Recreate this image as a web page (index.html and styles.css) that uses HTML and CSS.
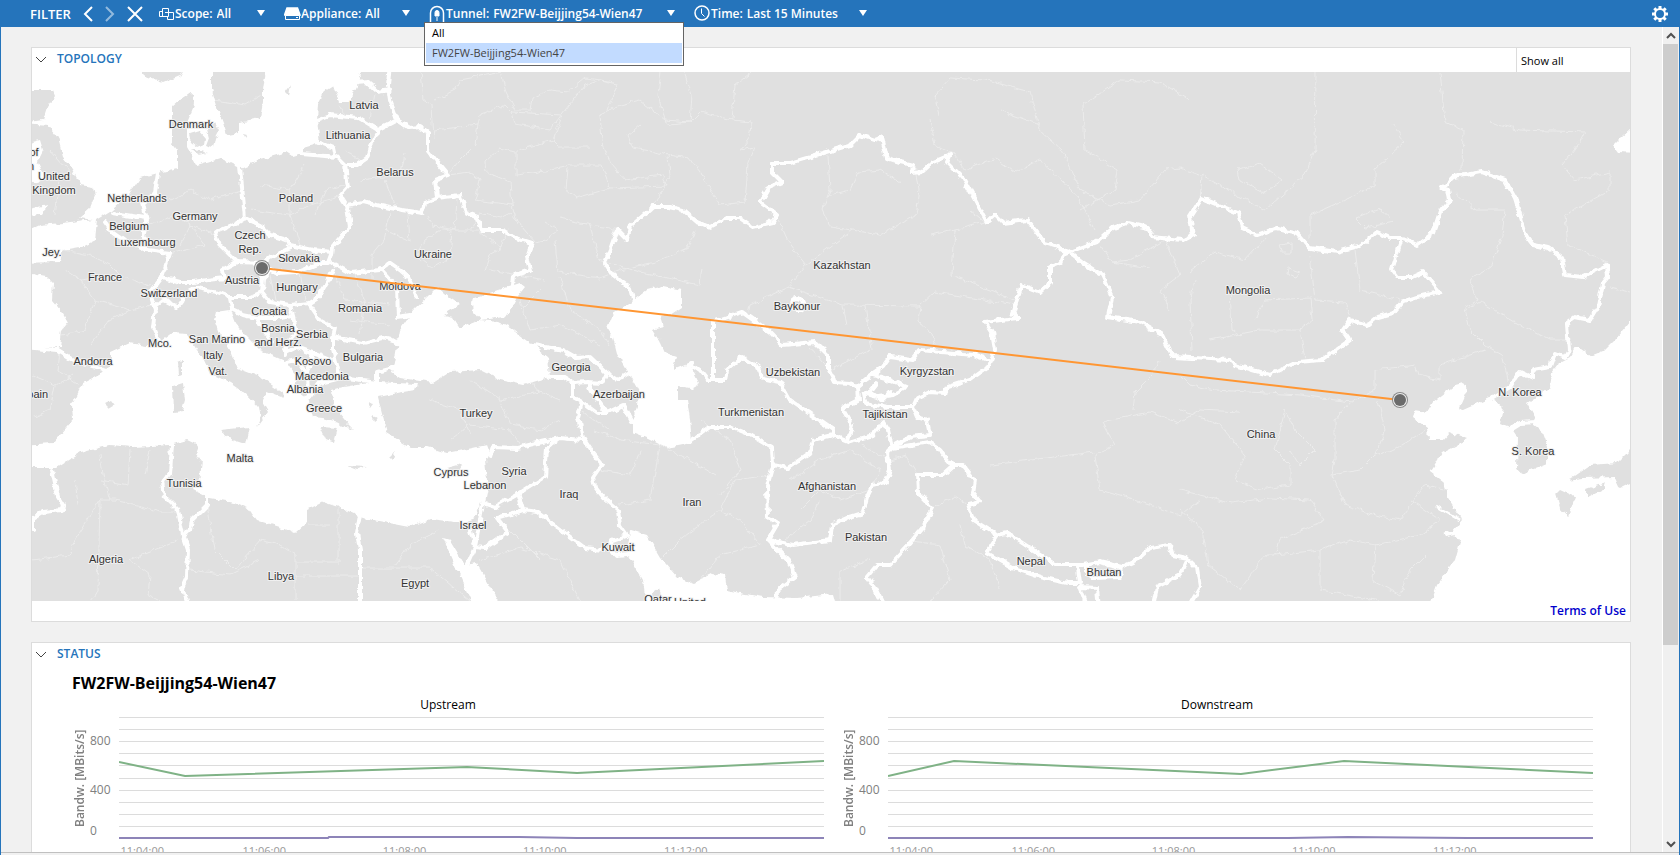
FILE: index.html
```html
<!DOCTYPE html>
<html lang="en">
  <head>
    <meta charset="UTF-8" />
    <meta name="viewport" content="width=device-width, initial-scale=1.0" />
    <title>Tunnel Topology</title>
    <link rel="stylesheet" href="styles.css">
  </head>
  <body>
    <header class="filter-bar">
      <span class="filter-title">FILTER</span>
      <div class="filter-nav">
        <button class="icon-button" aria-label="Back">
          <svg width="10" height="16" viewBox="0 0 10 16"><path d="M9 1L2 8l7 7" /></svg>
        </button>
        <button class="icon-button faded" aria-label="Forward" disabled>
          <svg width="10" height="16" viewBox="0 0 10 16"><path d="M1 1l7 7-7 7" /></svg>
        </button>
        <button class="icon-button" aria-label="Clear filter">
          <svg width="16" height="16" viewBox="0 0 16 16"><path d="M1 1l14 14M15 1L1 15" /></svg>
        </button>
      </div>

      <div class="filter-item scope">
        <svg width="17" height="14" viewBox="0 0 17 14" class="thin"><path d="M4 4.500H1.500v5H6M4.500 1.500h6v8h-6zM10.500 5.500h5v7h-6v-3M7 5.500h4" /></svg>
        <label for="scope">Scope:</label>
        <select id="scope"><option>All</option></select>
      </div>
      <div class="filter-item appliance">
        <svg width="17" height="14" viewBox="0 0 17 14"><path d="M3 1h10.500l2.500 7H.5z" class="solid" /><path d="M1.500 8.500h14v4h-14z" class="thin" /><path d="M12 10.500h2" class="thin" /></svg>
        <label for="appliance">Appliance:</label>
        <select id="appliance"><option>All</option></select>
      </div>
      <div class="filter-item tunnel">
        <svg width="17" height="18" viewBox="0 0 17 18"><path d="M1.500 17V8a6.500 6.500 0 0 1 13 0v9" /><path d="M8 5.500a2 2 0 0 1 2 2V11H6V7.500a2 2 0 0 1 2-2z" class="solid thin" /><path d="M8 12v4" class="thin" /></svg>
        <label for="tunnel">Tunnel:</label>
        <select id="tunnel">
          <option>All</option>
          <option selected>FW2FW-Beijjing54-Wien47</option>
        </select>
        <ul class="dropdown" role="listbox" aria-label="Tunnel">
          <li role="option" aria-selected="false">All</li>
          <li role="option" aria-selected="true">FW2FW-Beijjing54-Wien47</li>
        </ul>
      </div>
      <div class="filter-item time">
        <svg width="17" height="17" viewBox="0 0 17 17"><circle cx="8" cy="8" r="7" /><path d="M7.500 3.500v5l3 3" class="thin" /></svg>
        <label for="time">Time:</label>
        <select id="time"><option>Last 15 Minutes</option></select>
      </div>

      <button class="icon-button settings" aria-label="Settings">
        <svg width="18" height="18" viewBox="0 0 18 18"><circle cx="9" cy="9" r="5" /><g class="teeth"><path d="M9 1v3M9 14v3M1 9h3M14 9h3M3.300 3.300l2.200 2.200M12.500 12.500l2.200 2.200M3.300 14.700l2.200-2.200M12.500 5.500l2.200-2.200" /></g></svg>
      </button>
    </header>

    <div class="viewport">
      <main class="content">
        <section class="panel">
          <div class="panel-head">
            <button class="collapse" aria-label="Collapse topology">
              <svg width="12" height="8" viewBox="0 0 12 8"><path d="M1 1l5 5 5-5" /></svg>
            </button>
            <h2>TOPOLOGY</h2>
            <button class="show-all">Show all</button>
          </div>

          <svg class="map" viewBox="32 72 1598 529" role="img" aria-label="Tunnel map">
            <defs>
              <filter id="rough" filterUnits="userSpaceOnUse" x="20" y="60" width="1620" height="552" color-interpolation-filters="sRGB">
                <feTurbulence type="fractalNoise" baseFrequency="0.14" numOctaves="2" seed="4" />
                <feDisplacementMap in="SourceGraphic" scale="6" xChannelSelector="R" yChannelSelector="G" />
              </filter>
            </defs>
            <rect class="land" x="32" y="72" width="1598" height="529" />

            <g filter="url(#rough)">
              <!-- provinces -->
              <g class="provinces">
                <path d="M421 72L424 100L432 105L434 140M434 100L455 90L460 80L502 72M501 72L506 92L515 110L530 110L532 98L550 90L568 92L585 78L615 82M478 125L480 115L505 105L512 112L515 124L550 130L562 114L585 85L600 80L618 84L608 110M512 112L562 115L553 140L560 147L590 147M434 130L478 125L475 145L458 162L448 175L470 172L480 180L475 200L512 205L510 182L486 172L485 162L500 148L516 152L516 175L540 172L556 168L570 165L602 165L610 188L668 186M553 140L518 150M610 188L575 198L565 190L567 168M668 186L662 175L625 180L612 165L605 150L602 140L600 115L620 105L640 100L655 112L670 124L690 122L700 112L732 120L752 122L748 140L740 150L755 147M640 125L628 135L632 148L645 150L668 155L690 158L700 172L712 192L720 205L745 202L748 165L755 147M661 72L658 95L665 120L690 122L692 95L684 72M752 72L735 85L732 120M668 155L670 175L655 205M560 218L590 225L610 228L618 230" />
                <path d="M390 213L384 240L372 255L372 278M427 215L433 226L455 230L457 198M440 230L425 240L415 256L432 268L450 258L452 230L478 230L500 248L508 228M385 230L410 242L408 213M470 230L480 213L500 218L510 213L535 242L545 240L558 230L545 222M555 240L558 272L600 278L620 270L655 262L688 248L695 230M512 205L518 225M485 270L490 255L502 248M590 225L598 260L640 272L700 285L702 268" />
                <path d="M828 155L830 190L822 210L830 227L852 230L880 235L898 225L916 215L920 190L915 165M830 195L850 190L858 172L880 170L900 182M777 217L790 245L806 265L788 287L750 305L748 315M788 287L842 305L920 306L935 292L1015 305M852 230L806 265M930 235L955 230L952 275L990 290L1015 300M920 306L918 320L932 335L935 345M842 306L846 325M865 306L872 350M810 347L830 370L870 350M955 230L985 222L970 210M930 120L935 145L955 155L965 170L995 158L1015 172L1040 160L1062 180L1080 200L1095 230M940 115L935 95L950 78L985 80L1030 92L1040 130L1062 150L1080 190L1110 205L1140 200L1165 170L1180 168L1200 175M1083 105L1085 150L1118 170L1115 190L1080 210M1000 110L1040 125M1083 105L1120 80L1160 82L1190 100" />
                <path d="M1316 72L1315 150L1305 175L1265 210L1202 175L1200 200M1238 170L1260 163L1282 180L1265 193L1240 180zM1393 125L1405 142L1375 170L1375 185L1345 200L1310 215L1310 240M1355 218L1380 208L1393 222L1365 228zM1462 170L1463 130L1445 122L1440 72M1490 122L1520 130L1585 132L1578 145L1562 165L1575 180L1610 172L1610 190L1565 215L1568 245L1608 262M1455 192L1475 210L1505 210L1502 235L1492 265L1470 280L1478 300L1465 308L1470 330L1485 345L1502 355L1508 380M1465 310L1480 302L1515 322L1550 340L1568 340M1610 287L1630 292" />
                <path d="M1100 245L1112 262L1130 260L1165 240L1180 275L1160 290L1170 310M1112 262L1150 268M1190 272L1215 252L1245 260L1265 238M1195 280L1190 300L1192 350M1230 290L1232 330L1242 335M1210 340L1260 330L1300 330L1305 360M1255 320L1265 300L1310 298L1312 320L1300 330M1310 255L1315 300L1345 302L1352 325M1355 250L1360 290L1400 300M1280 245L1292 243L1292 252L1282 252zM1288 268L1300 272L1296 277L1287 274zM1180 375L1190 385L1215 390L1300 395L1350 402L1375 390L1375 370L1415 365L1418 375L1440 380L1440 365L1485 350M1350 402L1335 420L1335 460L1332 475L1360 470L1375 455L1385 430L1378 400M1180 410L1220 425L1245 455L1235 480L1260 490L1290 485L1290 465L1275 450L1285 410L1295 430L1315 450L1300 465L1290 450M1332 475L1345 505L1375 515L1400 520L1425 485L1450 490M1375 455L1395 450L1410 440L1425 430M1180 490L1200 495L1230 503L1270 498L1310 500L1325 520L1280 540L1275 555L1320 550L1350 540L1375 545L1420 535L1440 520L1410 500M1320 550L1320 590L1380 601M1375 545L1373 580L1400 595L1410 570L1425 555M1180 510L1203 530L1208 565L1240 590L1265 555L1275 555" />
                <path d="M1102 422L1150 412L1178 423L1200 410L1240 412M1102 422L1115 445L1095 455L1100 490L1140 502L1180 515L1200 500M990 465L1030 460L1095 452M1133 410L1135 392L1152 375L1160 360M860 445L890 460L905 455L917 473M790 480L820 460L850 450L880 470L870 490L840 500L820 490L800 510M785 540L810 520L820 500M930 508L955 497L968 505M960 525L965 545L990 560L1000 590M870 560L840 570L840 601M905 540L940 545L950 580L930 601M700 420L730 440L740 470L720 495M595 430L620 440L660 445L690 460L715 475M640 450L630 475L600 470M660 445L650 500L620 505M720 510L740 520L760 545M660 560L680 540L720 510L735 480L770 475M700 580L720 555L760 545" />
                <path d="M470 380L500 400L540 392L560 400M430 400L460 410L470 435M500 400L510 425L540 430L560 420M530 380L540 392M450 440L470 425L510 430L520 445M520 300L530 330L560 325L600 345M560 278L570 310L600 330L610 345M540 290L520 310M490 270L545 280M480 560L520 548L560 560L580 601M500 520L540 560M580 410L610 430" />
                <path d="M32 560L70 555L75 540L100 500L115 500L160 512L178 512M100 500L98 590L90 601M75 480L78 505M100 455L103 475L110 500M130 450L128 485L100 480M150 450L145 475M178 540L130 560L150 575L148 595L160 601M207 505L215 550L235 570L260 540L280 545L295 555L295 601M295 576L360 576M362 568L430 568L470 601M338 507L338 562L295 562M308 524L330 524M395 565L410 545L440 530M190 570L230 575L260 560" />
                <path d="M65 270L80 280L95 300L85 330L62 335M80 280L120 275L150 285M95 300L130 310L152 305M90 345L110 320L130 310M63 250L90 255L110 265L120 275M170 200L190 190L210 200L245 190M180 245L190 225L215 235M150 225L175 215L190 225L205 245L165 255M260 185L290 190L305 165M250 210L290 215L310 205L345 195M290 190L290 215L300 245M315 215L325 190L345 185M335 275L345 300L390 305M350 320L390 325M355 275L365 300L360 335M240 275L262 285M270 275L275 300M300 272L305 300M32 375L55 385L72 375M55 385L50 410L32 418M60 350L58 370L80 385M195 103L200 120M55 105L60 130M50 150L72 175M60 180L55 215M215 100L245 105L262 95M340 105L345 115M375 95L370 118M360 180L400 175L405 155M385 180L395 205M345 150L360 160" />
              </g>

              <!-- seas -->
              <g class="water">
                <path d="M22 62L137 62L145 76L163 83L180 76L188 62L212 62L212 90L218 110L223 123L227 135L238 133L238 122L260 118L263 103L263 90L267 62L350 62L362 76L355 90L350 102L340 102L333 85L325 90L318 103L317 120L320 142L303 147L303 153L293 156L287 152L260 160L240 168L220 158L197 165L187 147L187 123L195 103L193 95L180 100L172 107L172 142L178 150L178 168L158 173L140 178L130 193L110 212L97 220L95 240L80 247L63 250L60 262L22 263L22 233L40 225L63 223L92 219L80 217L90 208L95 195L93 187L80 185L72 168L63 157L58 138L48 125L22 123L43 120L47 107L55 95L53 90L22 90z" />
                <path d="M22 272L47 277L53 283L52 300L63 313L68 322L62 330L60 347L22 347z" />
                <path d="M22 145L40 140L43 150L37 162L46 180L34 183L22 175zM22 210L48 205L42 215L22 216z" />
                <path d="M22 445L53 443L73 420L72 405L83 383L102 373L110 365L110 352L130 343L153 347L173 332L187 333L193 343L203 358L210 373L230 383L247 395L258 407L260 420L257 427L268 412L262 402L267 392L283 398L282 392L260 377L237 368L230 350L220 333L215 320L217 312L230 310L235 323L243 333L260 350L287 362L297 377L295 390L308 398L313 417L323 418L350 425L340 413L333 403L332 390L343 387L377 382L417 384L415 390L397 393L378 397L383 417L387 433L410 447L427 447L447 453L463 450L487 445L490 453L485 460L487 480L482 500L473 520L463 523L430 519L410 527L363 518L338 507L323 502L307 510L307 523L295 534L280 527L257 520L248 508L233 502L210 498L193 490L200 477L202 462L195 453L198 445L187 440L170 445L133 447L110 445L80 453L57 468L22 468z" />
                <path d="M400 330L392 373L400 378L433 383L450 372L480 370L500 380L523 385L550 377L548 357L530 343L510 328L498 322L480 320L460 328L453 317L443 315L460 305L450 298L437 287L427 297L413 310L407 320z" />
                <path d="M472 303L473 298L493 292L520 283L525 287L517 297L512 307L505 317L480 320L473 312z" />
                <path d="M630 303L647 290L663 286L682 290L682 307L670 315L660 317L663 327L652 330L660 342L665 353L677 357L673 370L690 363L697 377L700 383L690 389L678 387L678 400L687 400L690 420L692 443L667 448L647 438L632 432L632 420L637 407L638 390L627 370L617 353L613 337L607 328L613 313z" />
                <path d="M630 530L647 535L660 557L677 577L693 583L713 573L725 575L727 590L740 593L763 597L797 598L833 594L838 612L647 612L643 580L627 553z" />
                <path d="M443 538L450 540L465 565L477 563L505 612L476 612L457 570z" />
                <path d="M1640 310L1617 338L1603 352L1593 356L1582 348L1575 348L1570 357L1560 362L1552 373L1550 387L1527 403L1535 417L1533 425L1543 433L1548 447L1547 463L1520 474L1517 468L1518 437L1512 428L1500 423L1503 407L1490 398L1463 410L1460 408L1468 390L1463 383L1455 385L1433 402L1427 412L1415 410L1413 418L1427 428L1428 440L1443 440L1450 432L1468 439L1442 453L1430 472L1443 482L1450 502L1462 520L1452 532L1460 542L1455 560L1437 585L1427 612L1640 612z" />
                <path d="M1640 120L1620 138L1613 145L1618 152L1640 153z" />
                <path class="river" d="M1436 506L1446 512L1460 520M1444 535L1456 532" />
              </g>

              <!-- islands -->
              <g class="land">
                <path d="M189 134L199 131L205 138L204 144L197 147L191 142zM206 126L216 123L220 130L216 138L214 148L206 146L209 138zM191 149L200 151L207 153L198 155zM285 92L291 84L289 96zM177 103L192 92L190 110L180 112zM243 134L247 135L245 138z" />
                <path d="M178 362L183 360L183 374L179 375zM173 386L183 383L185 400L182 411L174 412zM105 404L111 401L114 405L109 408zM220 430L249 427L245 444L233 440zM320 427L338 428L334 443L326 440zM347 466L367 467L357 470zM447 468L462 464L456 474L448 473zM333 418L345 422L353 430L342 426zM366 402L373 404L370 408zM372 416L378 418L374 421zM390 457L395 452L393 460z" />
                <path d="M1568 480L1590 465L1617 463L1632 448L1640 450L1640 478L1620 488L1615 477L1583 478zM1560 490L1575 497L1568 517L1560 508L1556 494zM1585 490L1605 483L1603 489L1588 497z" />
                <path d="M652 592L658 588L662 601L653 601z" />
              </g>

              <!-- country borders -->
              <g class="borders">
                <path d="M355 83L367 82L378 92L390 90M390 62L388 85L390 100L397 120M317 120L330 115L358 118L378 130L397 120M378 132L370 147L367 158L357 165L345 165M318 142L333 148L335 157M302 154L337 157L345 165L348 187L340 196L347 207L350 227L333 247L332 255" />
                <path d="M397 120L410 128L420 127L428 132L428 150L438 163L448 175L435 180L437 198M347 205L363 202L390 208L422 213L425 203L437 198L460 195L467 213L477 217L482 230L503 230L513 237L532 243L527 257L530 270L513 276L512 286" />
                <path d="M240 167L242 187L245 218L237 223L215 232L220 245L237 262L263 263L270 257L290 248L287 240L270 235L260 225L245 218M290 245L313 250L332 252L328 263L320 263L297 272L277 273L266 268" />
                <path d="M237 262L222 270L225 278L207 280L193 282L180 282L162 277M162 277L170 253L147 250L123 240L113 233L105 222M113 213L145 218L147 224M158 173L155 193L143 203L147 220L143 236L150 242" />
                <path d="M197 288L217 292L230 297L250 297L262 292L263 278L268 272M230 298L232 308M262 292L270 302L290 305L310 303L318 298L327 283L333 270M332 263L350 273L380 270L390 263L400 270L408 277L417 297M380 268L397 287L398 317L410 315" />
                <path d="M162 277L150 293L155 310L153 327L160 343M155 307L163 300L177 307L187 293L197 288M310 305L320 320L335 328L333 337L363 343L383 338L400 343M333 337L333 350L340 377L377 382L377 372L393 368M308 398L320 383L340 378" />
                <path d="M287 362L297 360L307 373L308 398M285 353L297 347L313 353L330 360M232 310L243 315L257 318L280 318L293 316L297 333L287 343L285 355M257 318L263 330L272 342M290 305L293 316M313 353L307 373" />
                <path d="M22 347L57 350L73 360L107 370M52 470L58 497L63 505L62 510L43 512L33 518L33 530M172 445L170 473L162 483L165 497L178 510L183 535L188 550L187 577L182 588L190 610M207 497L207 505L192 520L190 530L183 537M360 515L357 533L360 550L360 610" />
                <path d="M533 345L563 350L577 358L590 357L607 373L618 380L630 373M550 377L563 377L573 383L588 382L593 393L607 413L623 405L632 422M573 383L573 397L582 402L578 417L583 438L593 453L602 464L593 477L595 487L603 497L618 510L620 525L627 535M582 402L597 413L607 413M588 382L602 383L607 373" />
                <path d="M490 457L493 447L517 448L537 443L560 438L583 440M560 438L547 448L545 477L520 493L495 507L483 503M518 493L523 510L497 518L508 532L485 548L475 547M523 510L537 512L585 548L603 550M483 503L480 520L475 547L468 563M470 530L475 547M487 483L483 503M627 536L612 541L610 548L617 556L627 555" />
                <path d="M633 300L630 288L613 275L605 263L610 250L617 230L627 240L630 227L653 207L670 207L683 210L697 222L710 227L727 218L740 218L753 227L773 222L777 215L760 202L768 188L782 182L772 172L772 163L790 163L817 155L850 145L860 135L875 140L882 137L887 158L900 162L913 165L912 173L922 172L933 162L950 155L947 162L963 178L987 222L995 215L1003 223L1027 220L1045 243L1058 247L1068 253L1063 255L1060 263L1050 267L1050 283L1040 292L1022 285L1013 313L1017 318L985 322L992 333L995 350L988 367L970 380L948 387L945 393L930 392L917 398L913 407L917 417L927 420L930 435L910 437L890 448" />
                <path d="M988 360L973 355L953 353L920 350L912 360L890 357L883 367L873 375L890 380L907 387L893 395L878 397L863 393L865 403L887 407L913 407M883 367L867 378L855 388L850 383L835 382L828 368L828 355L815 342L782 345L770 332L742 312L713 322L713 380M877 383L870 392L882 400L890 392" />
                <path d="M690 363L700 370L708 380L725 380L727 370L742 357L758 367L762 378L780 382L790 400L833 430L833 437M692 440L710 427L730 427L750 435L772 448L773 465L788 468L810 453L813 440L833 435L850 442L873 435L883 422L888 430L892 448L930 442L940 450L952 465L963 465L975 480L973 493L980 502L968 505L973 520L997 535L1007 533L1033 550L1057 565L1083 565L1100 562L1122 567L1137 560L1150 548L1170 545L1173 555L1187 558L1197 568L1200 587L1188 608" />
                <path d="M773 465L767 487L768 517L778 523L768 540L790 563L795 577L778 590L777 608M768 540L793 545L830 540L832 525L850 517L863 513L867 497L873 485L885 482L890 470L887 453L892 448M857 387L858 400L842 408L852 425L848 440" />
                <path d="M952 467L943 475L917 475L918 493L933 508L923 527L910 543L890 565L877 565L867 577L875 588L885 608M997 537L987 553L1013 568L1040 577L1067 583L1080 583L1078 567M1087 566L1087 574L1093 578L1120 577L1122 567M1087 606L1080 587L1097 588L1099 608M1187 560L1180 575L1157 587L1153 606" />
                <path d="M1068 253L1080 248L1097 242L1113 228L1127 223L1148 228L1152 237L1183 240L1193 235L1190 217L1202 198L1238 213L1242 228L1257 235L1277 228L1297 233L1310 248L1337 252L1362 245L1377 232L1390 238L1402 238L1417 245L1433 233L1440 212L1450 200L1448 190L1442 188L1453 177L1482 172L1505 180L1515 198L1527 237L1533 245L1548 248L1562 258L1565 275L1583 277L1607 265L1608 277L1603 283L1598 307L1590 320L1575 317L1567 323L1569 350L1565 357L1555 353L1550 367L1533 370L1533 378L1520 372L1510 387L1492 398" />
                <path d="M1402 238L1392 270L1397 277L1412 277L1423 272L1440 292L1417 297L1402 302L1393 313L1378 317L1368 325L1350 320L1343 330L1350 340L1322 360L1297 362L1270 375L1235 365L1230 360L1173 357L1162 335L1140 322L1108 317L1112 297L1102 275L1083 263L1073 255M1512 428L1520 423L1535 422" />
                <circle cx="797" cy="304" r="6" />
              </g>
            </g>

            <g class="labels">
              <text x="364" y="109">Latvia</text>
              <text x="191" y="128">Denmark</text>
              <text x="348" y="139">Lithuania</text>
              <text x="395" y="176">Belarus</text>
              <text x="34" y="156">of</text>
              <text x="31" y="170">n</text>
              <text x="54" y="180">United</text>
              <text x="54" y="194">Kingdom</text>
              <text x="137" y="202">Netherlands</text>
              <text x="296" y="202">Poland</text>
              <text x="195" y="220">Germany</text>
              <text x="129" y="230">Belgium</text>
              <text x="145" y="246">Luxembourg</text>
              <text x="250" y="239">Czech</text>
              <text x="250" y="253">Rep.</text>
              <text x="299" y="262">Slovakia</text>
              <text x="52" y="256">Jey.</text>
              <text x="433" y="258">Ukraine</text>
              <text x="105" y="281">France</text>
              <text x="242" y="284">Austria</text>
              <text x="297" y="291">Hungary</text>
              <text x="400" y="290">Moldova</text>
              <text x="169" y="297">Switzerland</text>
              <text x="360" y="312">Romania</text>
              <text x="269" y="315">Croatia</text>
              <text x="278" y="332">Bosnia</text>
              <text x="278" y="346">and Herz.</text>
              <text x="312" y="338">Serbia</text>
              <text x="160" y="347">Mco.</text>
              <text x="217" y="343">San Marino</text>
              <text x="213" y="359">Italy</text>
              <text x="363" y="361">Bulgaria</text>
              <text x="218" y="375">Vat.</text>
              <text x="93" y="365">Andorra</text>
              <text x="313" y="365">Kosovo</text>
              <text x="322" y="380">Macedonia</text>
              <text x="305" y="393">Albania</text>
              <text x="324" y="412">Greece</text>
              <text x="34" y="398">Spain</text>
              <text x="240" y="462">Malta</text>
              <text x="184" y="487">Tunisia</text>
              <text x="106" y="563">Algeria</text>
              <text x="281" y="580">Libya</text>
              <text x="415" y="587">Egypt</text>
              <text x="476" y="417">Turkey</text>
              <text x="451" y="476">Cyprus</text>
              <text x="485" y="489">Lebanon</text>
              <text x="514" y="475">Syria</text>
              <text x="473" y="529">Israel</text>
              <text x="569" y="498">Iraq</text>
              <text x="692" y="506">Iran</text>
              <text x="618" y="551">Kuwait</text>
              <text x="571" y="371">Georgia</text>
              <text x="619" y="398">Azerbaijan</text>
              <text x="842" y="269">Kazakhstan</text>
              <text x="797" y="310">Baykonur</text>
              <text x="793" y="376">Uzbekistan</text>
              <text x="751" y="416">Turkmenistan</text>
              <text x="927" y="375">Kyrgyzstan</text>
              <text x="885" y="418">Tajikistan</text>
              <text x="827" y="490">Afghanistan</text>
              <text x="866" y="541">Pakistan</text>
              <text x="1031" y="565">Nepal</text>
              <text x="1104" y="576">Bhutan</text>
              <text x="1248" y="294">Mongolia</text>
              <text x="1261" y="438">China</text>
              <text x="1520" y="396">N. Korea</text>
              <text x="1533" y="455">S. Korea</text>
              <text x="658" y="603">Qatar</text>
              <text x="690" y="606">United</text>
            </g>

            <line class="link" x1="262" y1="268" x2="1400" y2="400" />
            <g class="node">
              <circle class="halo" cx="262" cy="268" r="8" /><circle class="ring" cx="262" cy="268" r="7" /><circle class="dot" cx="262" cy="268" r="6" />
              <circle class="halo" cx="1400" cy="400" r="8" /><circle class="ring" cx="1400" cy="400" r="7" /><circle class="dot" cx="1400" cy="400" r="6" />
            </g>
          </svg>

          <div class="panel-foot"><a href="#terms">Terms of Use</a></div>
        </section>

        <section class="panel">
          <div class="panel-head">
            <button class="collapse" aria-label="Collapse status">
              <svg width="12" height="8" viewBox="0 0 12 8"><path d="M1 1l5 5 5-5" /></svg>
            </button>
            <h2>STATUS</h2>
          </div>
          <div class="status-body">
            <h3>FW2FW-Beijjing54-Wien47</h3>
            <div class="charts">
              <figure class="chart">
                <figcaption>Upstream</figcaption>
                <div class="axis-title">Bandw. [MBits/s]</div>
                <div class="axis-values"><span>800</span><span>400</span><span>0</span></div>
                <svg class="plot">
                  <g class="grid">
                    <path d="M0 1h4000M0 13h4000M0 25h4000M0 37h4000M0 49h4000M0 62h4000M0 74h4000M0 86h4000M0 98h4000M0 110h4000" />
                  </g>
                  <svg width="100%" height="126" viewBox="0 0 705 126" preserveAspectRatio="none">
                    <polyline class="rate" points="0,46 66,60 348,51 458,57 705,45" />
                    <polyline class="used" points="0,122 209,122 210,121 400,121 458,122 705,122" />
                  </svg>
                  <g class="ticks">
                    <text x="3.3%" y="139">11:04:00</text>
                    <text x="20.600%" y="139">11:06:00</text>
                    <text x="40.500%" y="139">11:08:00</text>
                    <text x="60.400%" y="139">11:10:00</text>
                    <text x="80.400%" y="139">11:12:00</text>
                  </g>
                </svg>
              </figure>
              <figure class="chart">
                <figcaption>Downstream</figcaption>
                <div class="axis-title">Bandw. [MBits/s]</div>
                <div class="axis-values"><span>800</span><span>400</span><span>0</span></div>
                <svg class="plot">
                  <g class="grid">
                    <path d="M0 1h4000M0 13h4000M0 25h4000M0 37h4000M0 49h4000M0 62h4000M0 74h4000M0 86h4000M0 98h4000M0 110h4000" />
                  </g>
                  <svg width="100%" height="126" viewBox="0 0 705 126" preserveAspectRatio="none">
                    <polyline class="rate" points="0,60 66,45 353,58 456,45 705,57" />
                    <polyline class="used" points="0,122 400,122 460,121 580,122 705,122" />
                  </svg>
                  <g class="ticks">
                    <text x="3.3%" y="139">11:04:00</text>
                    <text x="20.600%" y="139">11:06:00</text>
                    <text x="40.500%" y="139">11:08:00</text>
                    <text x="60.400%" y="139">11:10:00</text>
                    <text x="80.400%" y="139">11:12:00</text>
                  </g>
                </svg>
              </figure>
            </div>
          </div>
        </section>
      </main>

      <div class="scrollbar">
        <button aria-label="Scroll up"><svg width="10" height="8" viewBox="0 0 10 8"><path d="M1 6l4-4 4 4" /></svg></button>
        <div class="track"><div class="thumb"></div></div>
        <button aria-label="Scroll down"><svg width="10" height="8" viewBox="0 0 10 8"><path d="M1 2l4 4 4-4" /></svg></button>
      </div>
    </div>
  </body>
</html>
```
FILE: styles.css
```css
* {
  box-sizing: border-box;
}
body {
  margin: 0;
  height: 100vh;
  display: flex;
  flex-direction: column;
  overflow: hidden;
  border-left: 1px solid #2574bb;
  border-right: 1px solid #2574bb;
  background: #f1f1f1;
  color: #000;
  font-family: "Segoe UI", "Open Sans", sans-serif;
  font-size: 12px;
}
button,
select {
  font: inherit;
  color: inherit;
  background: none;
  border: none;
  border-radius: 0;
  padding: 0;
  cursor: pointer;
}
h2,
h3,
ul,
figure {
  margin: 0;
  padding: 0;
}
svg {
  fill: none;
  stroke: currentColor;
  display: block;
}

/* filter bar */
.filter-bar {
  flex: none;
  display: flex;
  align-items: center;
  height: 27px;
  padding: 0 10px 0 29px;
  background: #2574bb;
  color: #fff;
}
.filter-title {
  font-size: 13px;
  font-weight: 600;
  width: 53px;
}
.filter-nav {
  display: flex;
  gap: 12px;
  width: 75px;
}
.icon-button svg {
  stroke-width: 2;
}
.faded {
  opacity: 0.5;
}
.filter-item {
  position: relative;
  display: flex;
  align-items: center;
  flex: none;
  height: 27px;
  margin-right: 18px;
  font-weight: 600;
}
.filter-item > svg {
  flex: none;
  stroke-width: 1.5;
}
.filter-item svg.thin,
.filter-item .thin {
  stroke-width: 1;
}
.solid {
  fill: #fff;
}
.filter-item select {
  flex: 1;
  min-width: 0;
  appearance: none;
  padding: 0 18px 0 4px;
  font-weight: 600;
}
.filter-item::after {
  content: "";
  position: absolute;
  right: 1px;
  top: 10px;
  border: 4px solid transparent;
  border-top: 6px solid #fff;
  border-bottom: none;
  pointer-events: none;
}
.scope {
  width: 108px;
}
.appliance {
  width: 127px;
}
.tunnel {
  width: 247px;
}
.time {
  width: 174px;
}
.dropdown {
  position: absolute;
  left: -5px;
  top: 22px;
  z-index: 1;
  width: 260px;
  padding-bottom: 2px;
  border: 1px solid #646464;
  background: #fff;
  color: #000;
  font-size: 11px;
  font-weight: 400;
  list-style: none;
}
.dropdown li {
  height: 20px;
  line-height: 20px;
  padding-left: 7px;
}
.dropdown li[aria-selected="true"] {
  margin: 0 1px;
  padding-left: 6px;
  background: #c2dbff;
  color: #444;
}
.settings {
  margin-left: auto;
}
.teeth {
  stroke-width: 3;
}

/* scrolling area */
.viewport {
  flex: 1;
  min-height: 0;
  display: flex;
  margin-bottom: 2px;
  border-bottom: 1px solid #c0c0c0;
}
.content {
  flex: 1;
  min-width: 0;
  overflow: hidden;
  padding: 20px 31px 0 30px;
}
.scrollbar {
  flex: none;
  display: flex;
  flex-direction: column;
  width: 17px;
  border-left: 1px solid #fff;
  background: #f0f0f0;
  color: #505050;
}
.scrollbar button {
  display: flex;
  align-items: center;
  justify-content: center;
  height: 17px;
}
.scrollbar button svg {
  stroke-width: 2;
}
.track {
  flex: 1;
}
.thumb {
  height: 76%;
  margin-right: 1px;
  background: #cdcdcd;
}

/* panels */
.panel {
  border: 1px solid #dcdcdc;
  background: #fff;
  margin-bottom: 20px;
}
.panel-head {
  display: flex;
  align-items: center;
  height: 24px;
  padding-left: 3px;
}
.collapse {
  width: 22px;
  color: #444;
}
.panel-head h2 {
  font-size: 12px;
  font-weight: 600;
  line-height: 22px;
  padding-bottom: 2px;
  color: #2574bb;
}
.show-all {
  align-self: stretch;
  margin-left: auto;
  width: 114px;
  padding-left: 4px;
  border-left: 1px solid #dcdcdc;
  text-align: left;
  font-size: 11px;
}
.panel-foot {
  height: 20px;
  line-height: 20px;
  padding-right: 4px;
  text-align: right;
}
.panel-foot a {
  color: #0000cd;
  font-weight: 600;
  text-decoration: none;
}

/* map */
.map {
  width: 100%;
  height: auto;
}
.land {
  fill: #e0e0e0;
  stroke: none;
}
.water {
  fill: #fff;
  stroke: none;
}
.river {
  fill: none;
  stroke: #fff;
  stroke-width: 3;
}
.borders {
  stroke: #fff;
  stroke-width: 4;
  stroke-linejoin: round;
  stroke-linecap: round;
}
.provinces {
  stroke: #ebebeb;
  stroke-width: 1;
}
.labels {
  fill: #333;
  stroke: #f0f0f0;
  stroke-width: 2;
  stroke-linejoin: round;
  paint-order: stroke;
  font-family: Arial, "Liberation Sans", sans-serif;
  font-size: 11px;
  text-anchor: middle;
}
.link {
  stroke: #ff9632;
  stroke-width: 2;
}
.node {
  stroke: none;
}
.halo {
  fill: #8a8a8a;
}
.ring {
  fill: #eee;
}
.dot {
  fill: #6b6b6b;
}

/* status charts */
.status-body {
  padding: 4px 37px 20px 40px;
}
.status-body h3 {
  font-size: 16px;
  font-weight: 700;
  line-height: 24px;
}
.charts {
  display: grid;
  grid-template-columns: 1fr 1fr;
  gap: 17px;
}
.chart {
  display: grid;
  grid-template-columns: 16px 31px 1fr;
}
.chart figcaption {
  grid-column: 1 / -1;
  line-height: 20px;
  padding-bottom: 1px;
  text-align: center;
}
.axis-title {
  writing-mode: vertical-rl;
  transform: rotate(180deg);
  height: 124px;
  line-height: 16px;
  text-align: center;
  font-size: 12px;
  font-weight: 600;
  color: #808080;
}
.axis-values {
  display: grid;
  grid-template-rows: 49px 41px 16px;
  padding: 17px 0 0 2px;
  line-height: 16px;
  color: #808080;
}
.plot {
  width: 100%;
  height: 146px;
}
.grid {
  stroke: #dcdcdc;
  stroke-width: 1;
  shape-rendering: crispEdges;
}
.rate {
  stroke: #7fb286;
  stroke-width: 2;
}
.used {
  stroke: #8d84b8;
  stroke-width: 2;
}
.ticks {
  fill: #999;
  stroke: none;
  font-size: 11px;
  text-anchor: middle;
}
```
